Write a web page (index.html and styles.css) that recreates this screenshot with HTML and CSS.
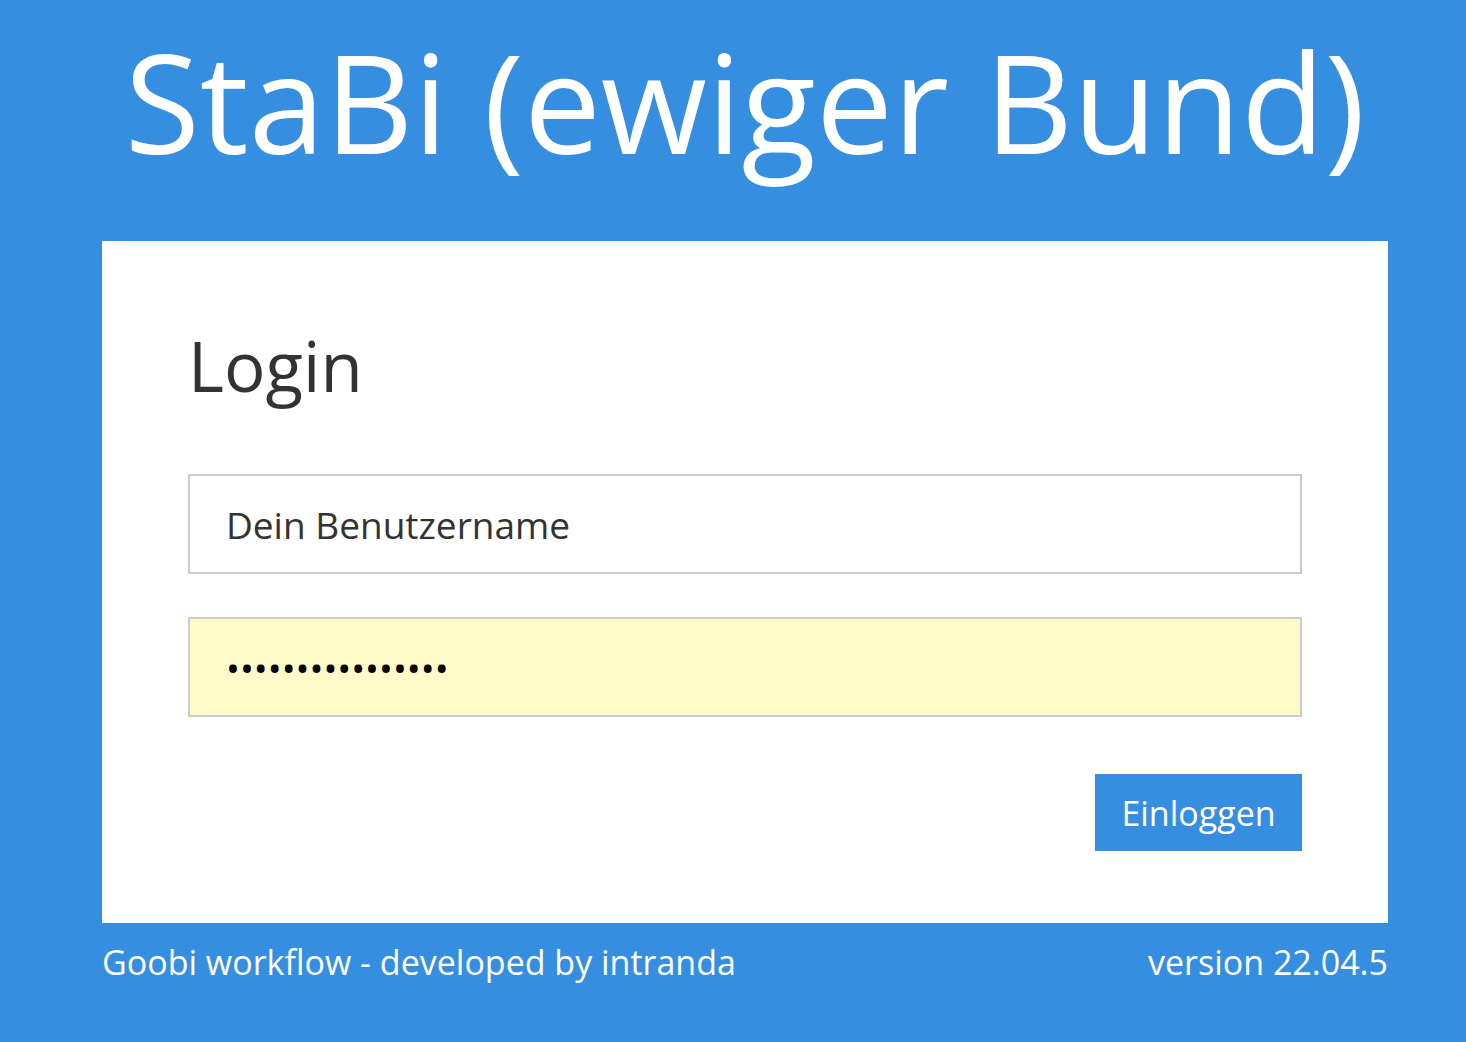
FILE: index.html
```html
<!DOCTYPE html>
<html lang="de">
<head>
<meta charset="utf-8">
<title>Login</title>
<link rel="stylesheet" href="styles.css">
</head>
<body>
<div class="page">
  <header class="header">
    <h1 class="title">StaBi (ewiger Bund)</h1>
  </header>
  <main class="card">
    <h2 class="login-title">Login</h2>
    <form class="form">
      <input class="field" type="text" value="Dein Benutzername">
      <input class="field field-filled" type="password" value="passwordpassword">
      <div class="actions">
        <button class="btn" type="button">Einloggen</button>
      </div>
    </form>
  </main>
  <footer class="footer">
    <span>Goobi workflow - developed by intranda</span>
    <span>version 22.04.5</span>
  </footer>
</div>
</body>
</html>
```

FILE: styles.css
```css
html, body {
  margin: 0;
  padding: 0;
}
body {
  background: #368ee0;
  font-family: "Open Sans", "Noto Sans", sans-serif;
  height: 1042px;
  overflow: hidden;
}
.page {
  width: 1286px;
  margin: 0 0 0 102px;
  display: flex;
  flex-direction: column;
}
.header {
  height: 241px;
  display: flex;
  justify-content: center;
}
.title {
  margin: 8px 0 0 0;
  font-size: 137px;
  font-weight: 400;
  color: #fff;
  line-height: normal;
  white-space: nowrap;
}
.card {
  background: #fff;
  padding: 77px 86px 72px;
}
.login-title {
  margin: 0 0 62px 0;
  font-size: 69px;
  font-weight: 400;
  color: #333;
  line-height: normal;
}
.form {
  display: flex;
  flex-direction: column;
}
.field {
  box-sizing: border-box;
  height: 100px;
  width: 100%;
  border: 2px solid #cccccc;
  background: #fff;
  padding: 0 36px;
  font-family: "Open Sans", "Noto Sans", sans-serif;
  font-size: 37px;
  color: #333;
  outline: none;
  margin: 0 0 43px 0;
}
.field-filled {
  background: #fffac8;
  color: #000;
  margin-bottom: 57px;
}
.actions {
  display: flex;
  justify-content: flex-end;
}
.btn {
  height: 77px;
  width: 207px;
  border: none;
  background: #368ee0;
  color: #fff;
  font-family: "Open Sans", "Noto Sans", sans-serif;
  font-size: 34px;
  padding: 0;
}
.footer {
  display: flex;
  justify-content: space-between;
  margin-top: 16px;
  color: #fff;
  font-size: 34px;
  line-height: normal;
}
```
